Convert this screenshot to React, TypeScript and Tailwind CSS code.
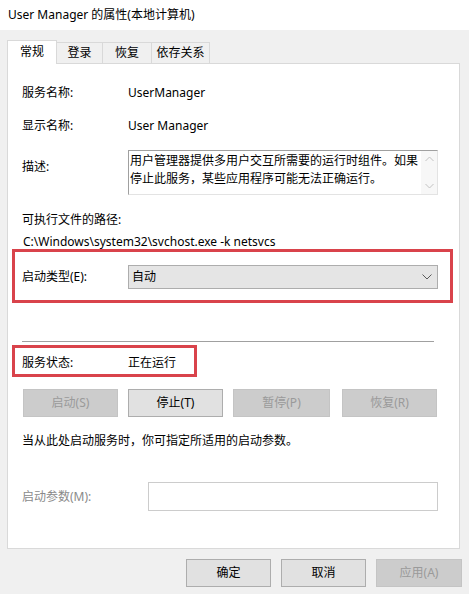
import React from 'react';

const font = { fontFamily: '"Noto Sans", "Noto Sans CJK SC", sans-serif' };

function Btn({ label, disabled, w }: { label: string; disabled?: boolean; w: string }) {
  return (
    <div
      className={`${w} h-[28px] flex items-center justify-center border text-[12px] ${
        disabled ? 'bg-[#cccccc] border-[#c4c4c4] text-[#9a9a9a]' : 'bg-[#e1e1e1] border-[#adadad] text-black'
      }`}
    >
      {label}
    </div>
  );
}

export default function App() {
  return (
    <div className="w-[469px] h-[594px] bg-[#f0f0f0] overflow-hidden text-[12px] leading-[16px] text-black" style={font}>
      {/* Title bar */}
      <div className="h-[30px] bg-white flex items-center pl-[8px] text-[12px]">User Manager 的属性(本地计算机)</div>

      {/* Tabs */}
      <div className="flex items-end h-[33px] pl-[7px]">
        <div className="w-[50px] h-[24px] bg-white border border-b-0 border-[#d9d9d9] flex items-center justify-center relative z-10 -mb-[1px] pb-[2px]">
          常规
        </div>
        <div className="w-[46px] h-[21px] bg-[#f0f0f0] border border-l-0 border-b-0 border-[#d9d9d9] flex items-center justify-center">登录</div>
        <div className="w-[49px] h-[21px] bg-[#f0f0f0] border border-l-0 border-b-0 border-[#d9d9d9] flex items-center justify-center">恢复</div>
        <div className="w-[58px] h-[21px] bg-[#f0f0f0] border border-l-0 border-b-0 border-[#d9d9d9] flex items-center justify-center">依存关系</div>
      </div>

      {/* Panel */}
      <div className="ml-[7px] w-[453px] h-[486px] bg-white border border-[#d9d9d9]">
        <div className="mt-[21px] flex pl-[14px] h-[16px]">
          <span className="w-[106px]">服务名称:</span>
          <span>UserManager</span>
        </div>
        <div className="mt-[17px] flex pl-[14px] h-[16px]">
          <span className="w-[106px]">显示名称:</span>
          <span>User Manager</span>
        </div>

        {/* Description */}
        <div className="mt-[16px] flex pl-[14px]">
          <span className="w-[106px] pt-[9px]">描述:</span>
          <div className="w-[310px] h-[45px] flex border-t border-l border-[#a0a0a0] border-r border-b border-r-[#e3e3e3] border-b-[#e3e3e3]">
            <div className="flex-1 pl-[1px] pt-[1px] leading-[18px]">
              用户管理器提供多用户交互所需要的运行时组件。如果停止此服务，某些应用程序可能无法正确运行。
            </div>
            <div className="w-[16px] flex flex-col items-center justify-between py-[5px] bg-[#f7f7f7]">
              <svg width="9" height="6" viewBox="0 0 9 6" fill="none" stroke="#c2c2c2" strokeWidth="1">
                <polyline points="0.5,5 4.5,1 8.5,5" />
              </svg>
              <svg width="9" height="6" viewBox="0 0 9 6" fill="none" stroke="#c2c2c2" strokeWidth="1">
                <polyline points="0.5,1 4.5,5 8.5,1" />
              </svg>
            </div>
          </div>
        </div>

        <div className="mt-[17px] pl-[14px] h-[16px]">可执行文件的路径:</div>
        <div className="mt-[6px] pl-[15px] h-[16px]">C:\Windows\system32\svchost.exe -k netsvcs</div>

        {/* Startup type (highlighted) */}
        <div className="-mt-[1px] ml-[4px] w-[441px] border-[3px] border-[#d9434b] pt-[13px] pb-[11px] pl-[7px] flex items-center">
          <span className="w-[106px]">启动类型(E):</span>
          <div className="w-[310px] h-[24px] bg-[#e5e5e5] border border-[#adadad] flex items-center justify-between pl-[3px] pr-[5px]">
            <span>自动</span>
            <svg width="10" height="6" viewBox="0 0 10 6" fill="none" stroke="#5a5a5a" strokeWidth="1">
              <polyline points="0.5,0.5 5,5 9.5,0.5" />
            </svg>
          </div>
        </div>

        <div className="mt-[38px] ml-[14px] w-[412px] h-[1px] bg-[#a0a0a0]" />

        {/* Service status (highlighted) */}
        <div className="mt-[3px] ml-[4px] w-[185px] h-[32px] border-[3px] border-[#d9434b] flex items-center pl-[7px] pt-[4px]">
          <span className="w-[106px]">服务状态:</span>
          <span>正在运行</span>
        </div>

        <div className="mt-[12px] ml-[15px] flex">
          <Btn label="启动(S)" disabled w="w-[95px]" />
          <div className="w-[10px]" />
          <Btn label="停止(T)" w="w-[95px]" />
          <div className="w-[10px]" />
          <Btn label="暂停(P)" disabled w="w-[97px]" />
          <div className="w-[12px]" />
          <Btn label="恢复(R)" disabled w="w-[95px]" />
        </div>

        <div className="mt-[16px] pl-[14px] h-[16px]">当从此处启动服务时，你可指定所适用的启动参数。</div>

        <div className="mt-[33px] pl-[14px] flex items-center">
          <span className="w-[126px] text-[#8a8a8a]">启动参数(M):</span>
          <div className="w-[290px] h-[29px] bg-white border border-[#cccccc]" />
        </div>
      </div>

      {/* Footer buttons */}
      <div className="mt-[10px] flex justify-end pr-[7px] gap-[10px]">
        <Btn label="确定" w="w-[85px]" />
        <Btn label="取消" w="w-[85px]" />
        <Btn label="应用(A)" disabled w="w-[86px]" />
      </div>
    </div>
  );
}
